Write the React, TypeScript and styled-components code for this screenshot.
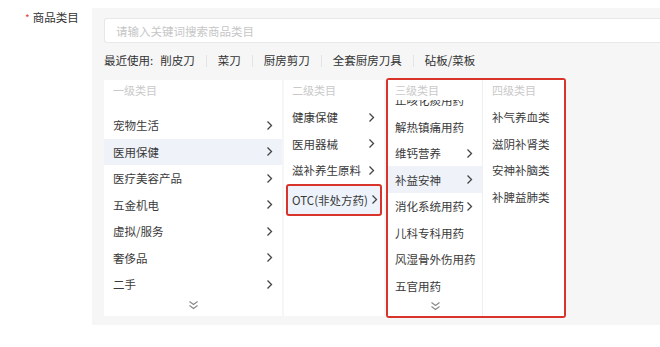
import styled, { createGlobalStyle } from "styled-components";

const GlobalStyle = createGlobalStyle`
  body {
    margin: 0;
    background: #fff;
    font-family: "Noto Sans CJK SC", "Liberation Sans", sans-serif;
    color: #333;
  }
`;

const FormRow = styled.div`
  display: flex;
  padding-top: 8px;
  width: 660px;
  height: 347px;
  box-sizing: border-box;
  overflow: hidden;
`;
const Label = styled.div`
  width: 92px;
  flex-shrink: 0;
  padding: 2px 0 0 25px;
  box-sizing: border-box;
  font-size: 11.5px;
  line-height: 14px;
  color: #333;
  span {
    color: #e0463a;
    margin-right: 3px;
    font-size: 10px;
  }
`;
const Panel = styled.div`
  flex: 1;
  background: #f6f6f6;
  padding: 10px 0 9px 12px;
  height: 317px;
  box-sizing: border-box;
  display: flex;
  flex-direction: column;
`;
const SearchInput = styled.div`
  height: 25px;
  background: #fff;
  border: 1px solid #e8e8e8;
  border-right: 0;
  border-radius: 3px 0 0 3px;
  box-sizing: border-box;
  display: flex;
  align-items: center;
  padding-left: 11px;
  font-size: 11.5px;
  color: #c6c6c6;
`;
const Recent = styled.div`
  display: flex;
  align-items: center;
  height: 22px;
  margin-top: 6px;
  font-size: 11.5px;
  color: #333;
`;
const RecentLabel = styled.span`
  margin-right: 7px;
`;
const RecentItem = styled.span`
  &:not(:last-child)::after {
    content: "";
    display: inline-block;
    width: 1px;
    height: 12px;
    background: #e4e4e4;
    margin: 0 11px;
    vertical-align: -2px;
  }
`;
const Columns = styled.div`
  display: flex;
  gap: 2px;
  height: 236px;
  margin-top: 9px;
`;
const Column = styled.div<{ $width?: number; $divider?: boolean }>`
  width: ${(p) => (p.$width ? `${p.$width}px` : "auto")};
  flex: ${(p) => (p.$width ? "none" : 1)};
  background: #fff;
  display: flex;
  flex-direction: column;
  overflow: hidden;
  border-right: ${(p) => (p.$divider ? "1px solid #f0f0f0" : "0")};
`;
const Group = styled.div`
  width: 180px;
  margin: -2px 0;
  border: 2px solid #d8342c;
  border-radius: 3px;
  box-sizing: border-box;
  display: flex;
  background: #fff;
`;
const Header = styled.div<{ $indent?: number }>`
  height: 20px;
  line-height: 20px;
  padding-left: ${(p) => p.$indent ?? 8}px;
  font-size: 11px;
  color: #c9c9c9;
  flex-shrink: 0;
  background: #fff;
  position: relative;
  z-index: 1;
`;
const List = styled.div<{ $pad: number }>`
  flex: 1;
  overflow: hidden;
  padding-top: ${(p) => p.$pad}px;
`;
const Scrolled = styled.div`
  margin-top: -13.25px;
`;
const Row = styled.div<{ $active?: boolean; $marked?: boolean; $indent?: number }>`
  display: flex;
  align-items: center;
  justify-content: space-between;
  height: ${(p) => (p.$marked ? "32px" : "26.5px")};
  padding: 0 ${(p) => (p.$marked ? "2px" : "9px")} 0
    ${(p) => (p.$marked ? 4 : p.$indent ?? 8)}px;
  margin: 0 ${(p) => (p.$marked ? "2px" : "0")};
  box-sizing: border-box;
  font-size: 11.5px;
  color: #3a3a3a;
  white-space: nowrap;
  background: ${(p) => (p.$marked ? "#eef3fb" : p.$active ? "#eff3f9" : "transparent")};
  border: ${(p) => (p.$marked ? "2px solid #d8342c" : "0")};
  border-radius: ${(p) => (p.$marked ? "3px" : "0")};
`;
const More = styled.div`
  display: flex;
  justify-content: center;
  padding-top: 2px;
`;

const Chevron = () => (
  <svg width="7" height="11" viewBox="0 0 7 11">
    <polyline points="1.5,1.5 5.5,5.5 1.5,9.5" fill="none" stroke="#444" strokeWidth="1.3" />
  </svg>
);
const DoubleDown = () => (
  <svg width="11" height="10" viewBox="0 0 11 10">
    <polyline points="1.5,1.5 5.5,4.5 9.5,1.5" fill="none" stroke="#888" strokeWidth="1.1" />
    <polyline points="1.5,5.5 5.5,8.5 9.5,5.5" fill="none" stroke="#888" strokeWidth="1.1" />
  </svg>
);

interface Item {
  name: string;
  next?: boolean;
  active?: boolean;
  marked?: boolean;
}

const level1: Item[] = [
  { name: "宠物生活", next: true },
  { name: "医用保健", next: true, active: true },
  { name: "医疗美容产品", next: true },
  { name: "五金机电", next: true },
  { name: "虚拟/服务", next: true },
  { name: "奢侈品", next: true },
  { name: "二手", next: true },
];
const level2: Item[] = [
  { name: "健康保健", next: true },
  { name: "医用器械", next: true },
  { name: "滋补养生原料", next: true },
  { name: "OTC(非处方药)", next: true, marked: true },
];
const level3: Item[] = [
  { name: "止咳化痰用药" },
  { name: "解热镇痛用药" },
  { name: "维钙营养", next: true },
  { name: "补益安神", next: true, active: true },
  { name: "消化系统用药", next: true },
  { name: "儿科专科用药" },
  { name: "风湿骨外伤用药" },
  { name: "五官用药" },
];
const level4: Item[] = [
  { name: "补气养血类" },
  { name: "滋阴补肾类" },
  { name: "安神补脑类" },
  { name: "补脾益肺类" },
];
const recent = ["削皮刀", "菜刀", "厨房剪刀", "全套厨房刀具", "砧板/菜板"];

const rows = (items: Item[], indent?: number) =>
  items.map((it) => (
    <Row key={it.name} $active={it.active} $marked={it.marked} $indent={indent}>
      <span>{it.name}</span>
      {it.next && <Chevron />}
    </Row>
  ));

export default function App() {
  return (
    <>
      <GlobalStyle />
      <FormRow>
        <Label>
          <span>*</span>商品类目
        </Label>
        <Panel>
          <SearchInput>请输入关键词搜索商品类目</SearchInput>
          <Recent>
            <RecentLabel>最近使用:</RecentLabel>
            {recent.map((r) => (
              <RecentItem key={r}>{r}</RecentItem>
            ))}
          </Recent>
          <Columns>
            <Column $width={178}>
              <Header $indent={9}>一级类目</Header>
              <List $pad={12}>
                {rows(level1, 9)}
                <More>
                  <DoubleDown />
                </More>
              </List>
            </Column>
            <Column $width={100}>
              <Header>二级类目</Header>
              <List $pad={4}>{rows(level2)}</List>
            </Column>
            <Group>
              <Column $width={94} $divider>
                <Header $indent={7}>三级类目</Header>
                <List $pad={0}>
                  <Scrolled>
                    {rows(level3, 7)}
                    <More>
                      <DoubleDown />
                    </More>
                  </Scrolled>
                </List>
              </Column>
              <Column>
                <Header $indent={9}>四级类目</Header>
                <List $pad={4}>{rows(level4, 9)}</List>
              </Column>
            </Group>
          </Columns>
        </Panel>
      </FormRow>
    </>
  );
}
